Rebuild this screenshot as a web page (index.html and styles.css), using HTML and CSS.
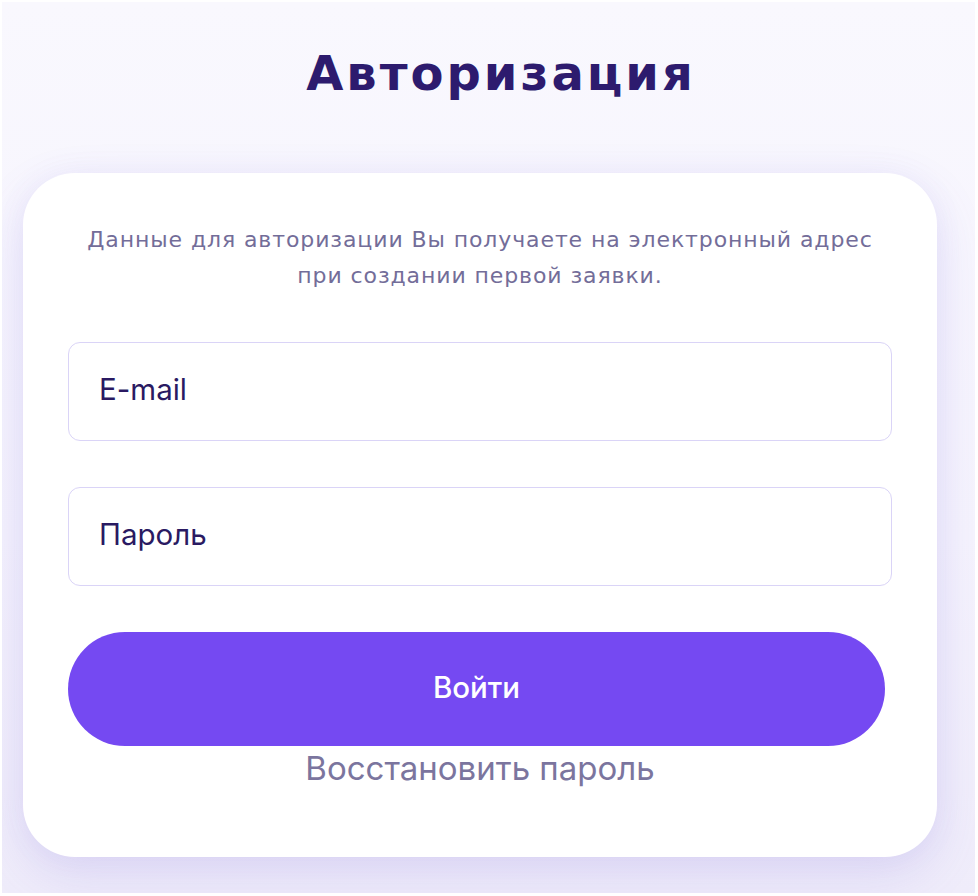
FILE: index.html
```html
<!DOCTYPE html>
<html lang="ru">
<head>
<meta charset="utf-8">
<title>Авторизация</title>
<link rel="stylesheet" href="styles.css">
</head>
<body>
<div class="page">
  <h1 class="title">Авторизация</h1>
  <div class="card">
    <p class="hint">Данные для авторизации Вы получаете на электронный адрес<br>при создании первой заявки.</p>
    <form class="form">
      <div class="field"><span class="placeholder">E-mail</span></div>
      <div class="field"><span class="placeholder">Пароль</span></div>
      <div class="btn">Войти</div>
      <a class="restore">Восстановить пароль</a>
    </form>
  </div>
</div>
</body>
</html>
```

FILE: styles.css
```css
html {
  background: #ffffff;
}
body {
  margin: 2px 3px 3px 2px;
  font-family: "Inter", "Roboto", "Liberation Sans", sans-serif;
}
.page {
  height: 891px;
  box-sizing: border-box;
  background: linear-gradient(180deg, #f9f8fe 0%, #f5f3fd 60%, #efecfa 100%);
  padding: 0 38px 0 21px;
  overflow: hidden;
}
.title {
  margin: 0;
  padding: 42px 0 0 42px;
  height: 171px;
  box-sizing: border-box;
  text-align: center;
  font-family: "DejaVu Sans", "Lato", sans-serif;
  font-weight: 700;
  font-size: 48px;
  line-height: 58px;
  letter-spacing: 3px;
  color: #2d1b6e;
}
.card {
  background: #ffffff;
  border-radius: 52px;
  padding: 49px 45px 66px;
  box-shadow: 0 18px 50px rgba(120, 100, 220, 0.16), 0 0 30px rgba(120, 100, 220, 0.06);
}
.hint {
  margin: 0 0 48px;
  text-align: center;
  font-family: "DejaVu Sans", "Inter", sans-serif;
  font-size: 22px;
  line-height: 36px;
  letter-spacing: 0.9px;
  color: #736d99;
}
.form {
  display: flex;
  flex-direction: column;
  gap: 46px;
}
.field {
  height: 99px;
  box-sizing: border-box;
  border: 1.5px solid #dad4f7;
  border-radius: 12px;
  display: flex;
  align-items: center;
  padding: 0 0 6px 30px;
}
.placeholder {
  font-size: 29.5px;
  color: #2a1a62;
}
.btn {
  height: 114px;
  box-sizing: border-box;
  padding-bottom: 4px;
  margin-right: 7px;
  border-radius: 57px;
  background: #7549f2;
  color: #ffffff;
  font-size: 29.5px;
  font-weight: 500;
  display: flex;
  align-items: center;
  justify-content: center;
}
.restore {
  margin-top: -46px;
  text-align: center;
  font-size: 33px;
  line-height: 45px;
  color: #7b759e;
}
```
